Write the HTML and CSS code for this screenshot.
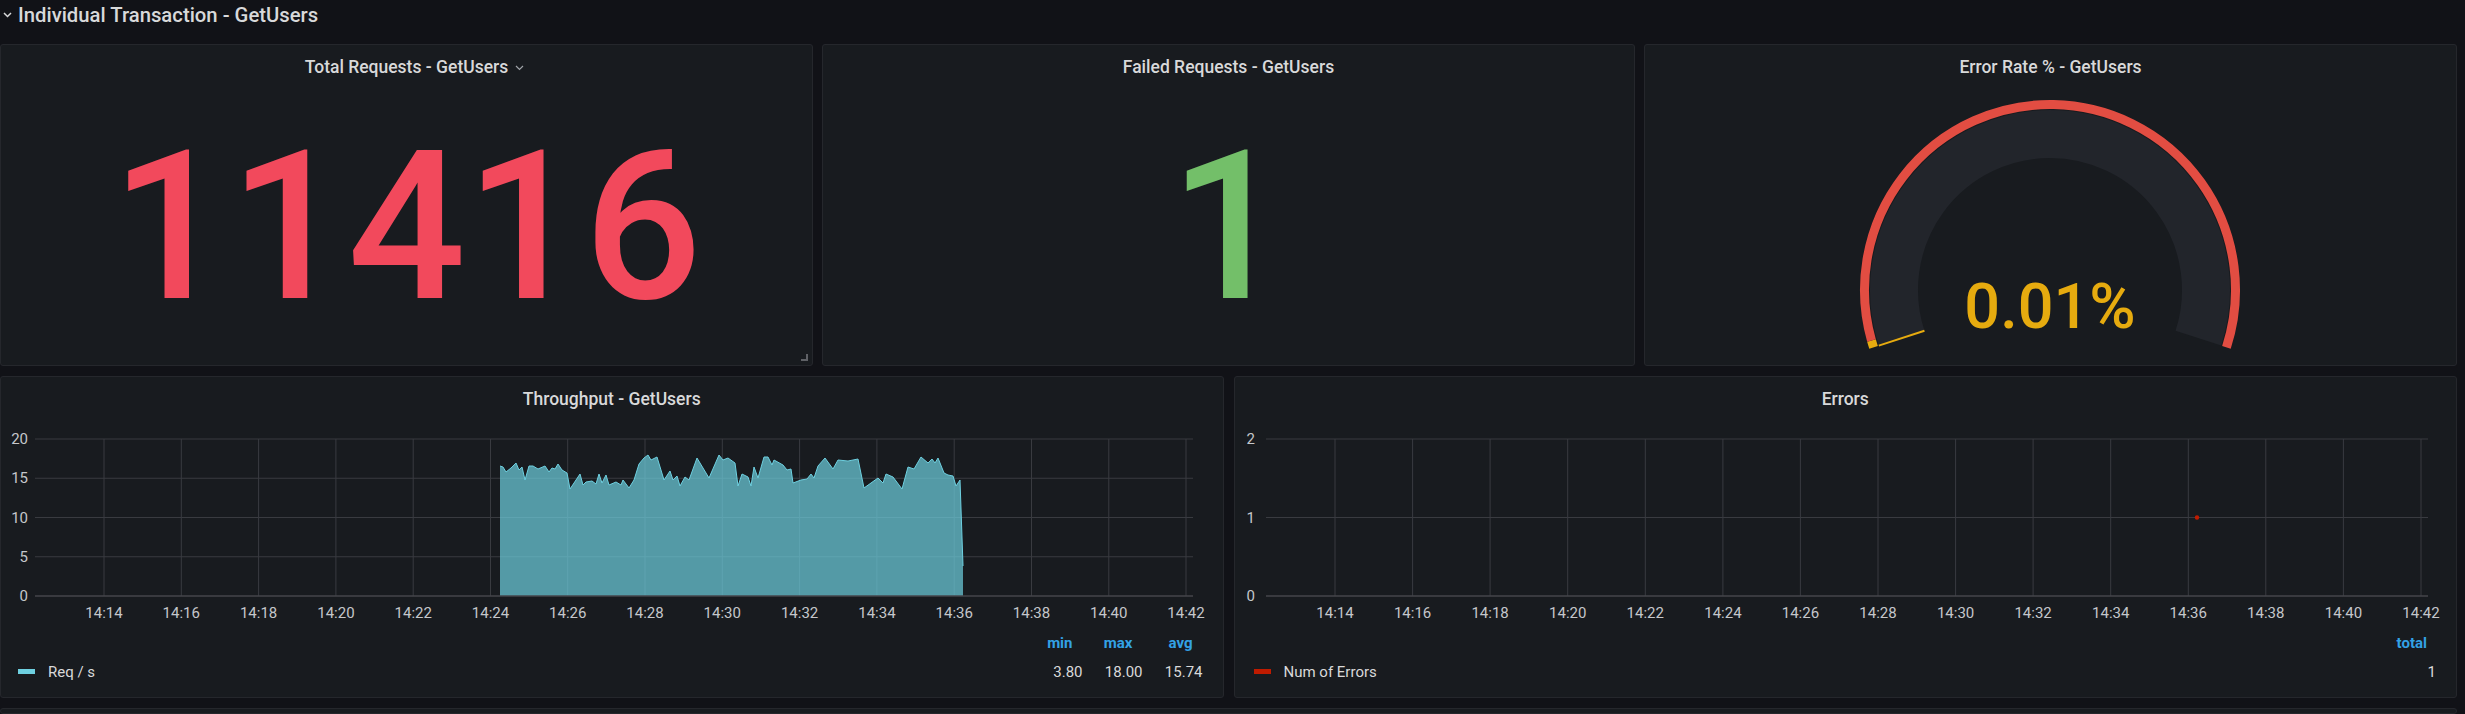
FILE: index.html
```html
<!DOCTYPE html>
<html lang="en">
<head>
<meta charset="utf-8">
<title>Individual Transaction - GetUsers</title>
<link rel="stylesheet" href="styles.css">
</head>
<body>
<div class="dashboard">
  <div class="row-header">
    <svg class="row-chevron" width="9" height="6" viewBox="0 0 9 6"><path d="M1 1 L4.5 4.5 L8 1" fill="none" stroke="#d8d9da" stroke-width="1.5"/></svg>
    <span class="row-title">Individual Transaction - GetUsers</span>
  </div>

  <div class="grid-3">
    <div class="panel">
      <div class="panel-header"><span class="title-text">Total Requests - GetUsers<svg class="title-chevron" width="9" height="6" viewBox="0 0 9 6"><path d="M1 1 L4.5 4.5 L8 1" fill="none" stroke="#9fa3a8" stroke-width="1.2"/></svg></span></div>
      <div class="stat-body stat-red">11416</div>
      <span class="resize-handle"></span>
    </div>
    <div class="panel">
      <div class="panel-header">Failed Requests - GetUsers</div>
      <div class="stat-body stat-green">1</div>
    </div>
    <div class="panel">
      <div class="panel-header">Error Rate % - GetUsers</div>
      <div class="gauge-body">
        <svg class="gauge" width="811" height="276" viewBox="0 0 811 276">
          <path d="M256.63 250.21 A156 156 0 1 1 553.37 250.21" fill="none" stroke="#22252b" stroke-width="48"/>
          <path d="M228.57 259.32 A185.5 185.5 0 0 1 226.5 252.5" fill="none" stroke="#e6ab0f" stroke-width="9"/>
          <path d="M226.5 252.5 A185.5 185.5 0 1 1 581.43 259.32" fill="none" stroke="#e24d42" stroke-width="9"/>
          <line x1="279.46" y1="242.79" x2="233.8" y2="257.62" stroke="#e6ab0f" stroke-width="2"/>
          <text class="gauge-value" x="405" y="240" text-anchor="middle">0.01%</text>
        </svg>
      </div>
    </div>
  </div>

  <div class="grid-2">
    <div class="panel">
      <div class="panel-header">Throughput - GetUsers</div>
      <svg class="graph" width="1221" height="208" viewBox="0 0 1221 208">
        <g class="grid-lines">
          <line x1="34" y1="19" x2="1192" y2="19"/>
          <line x1="34" y1="58.25" x2="1192" y2="58.25"/>
          <line x1="34" y1="97.5" x2="1192" y2="97.5"/>
          <line x1="34" y1="136.75" x2="1192" y2="136.75"/>
          <line x1="103" y1="19" x2="103" y2="176"/>
          <line x1="180.3" y1="19" x2="180.3" y2="176"/>
          <line x1="257.6" y1="19" x2="257.6" y2="176"/>
          <line x1="334.9" y1="19" x2="334.9" y2="176"/>
          <line x1="412.2" y1="19" x2="412.2" y2="176"/>
          <line x1="489.5" y1="19" x2="489.5" y2="176"/>
          <line x1="566.7" y1="19" x2="566.7" y2="176"/>
          <line x1="644" y1="19" x2="644" y2="176"/>
          <line x1="721.3" y1="19" x2="721.3" y2="176"/>
          <line x1="798.6" y1="19" x2="798.6" y2="176"/>
          <line x1="875.9" y1="19" x2="875.9" y2="176"/>
          <line x1="953.2" y1="19" x2="953.2" y2="176"/>
          <line x1="1030.5" y1="19" x2="1030.5" y2="176"/>
          <line x1="1107.8" y1="19" x2="1107.8" y2="176"/>
          <line x1="1185" y1="19" x2="1185" y2="176"/>
        </g>
        <path class="area" d="M499 176 L499 46 L502 47 L505 52 L510 48 L515 43 L518 50 L521 47 L524 60 L528 46 L532 46 L537 49 L544 46 L548 52 L551 48 L554 49 L557 44 L561 50 L566 53 L569 69 L573 63 L579 54 L582 65 L585 62 L591 61 L595 64 L598 54 L601 63 L605 55 L608 65 L615 62 L620 65 L622 60 L628 68 L633 60 L638 44 L643 38 L647 35 L650 40 L656 37 L663 60 L669 51 L672 60 L676 56 L679 66 L684 57 L688 60 L696 38 L708 58 L718 35 L722 40 L727 38 L734 43 L737 66 L741 54 L747 57 L750 66 L753 47 L757 58 L763 37 L767 37 L771 45 L773 40 L782 45 L786 50 L790 49 L792 63 L800 60 L806 59 L810 54 L813 58 L817 46 L824 38 L832 49 L837 40 L847 41 L857 39 L863 68 L877 58 L882 63 L885 54 L892 57 L901 69 L907 47 L913 49 L920 37 L927 43 L931 39 L934 43 L937 38 L943 53 L947 55 L952 56 L955 66 L959 60 L962 146 L962 176 Z"/>
        <polyline class="series-line" points="499,46 502,47 505,52 510,48 515,43 518,50 521,47 524,60 528,46 532,46 537,49 544,46 548,52 551,48 554,49 557,44 561,50 566,53 569,69 573,63 579,54 582,65 585,62 591,61 595,64 598,54 601,63 605,55 608,65 615,62 620,65 622,60 628,68 633,60 638,44 643,38 647,35 650,40 656,37 663,60 669,51 672,60 676,56 679,66 684,57 688,60 696,38 708,58 718,35 722,40 727,38 734,43 737,66 741,54 747,57 750,66 753,47 757,58 763,37 767,37 771,45 773,40 782,45 786,50 790,49 792,63 800,60 806,59 810,54 813,58 817,46 824,38 832,49 837,40 847,41 857,39 863,68 877,58 882,63 885,54 892,57 901,69 907,47 913,49 920,37 927,43 931,39 934,43 937,38 943,53 947,55 952,56 955,66 959,60 962,146"/>
        <line class="axis-line" x1="34" y1="176" x2="1192" y2="176"/>
        <g class="y-labels" text-anchor="end">
          <text x="27" y="19">20</text>
          <text x="27" y="58.25">15</text>
          <text x="27" y="97.5">10</text>
          <text x="27" y="136.75">5</text>
          <text x="27" y="176">0</text>
        </g>
        <g class="x-labels" text-anchor="middle">
          <text x="103" y="193">14:14</text>
          <text x="180.3" y="193">14:16</text>
          <text x="257.6" y="193">14:18</text>
          <text x="334.9" y="193">14:20</text>
          <text x="412.2" y="193">14:22</text>
          <text x="489.5" y="193">14:24</text>
          <text x="566.7" y="193">14:26</text>
          <text x="644" y="193">14:28</text>
          <text x="721.3" y="193">14:30</text>
          <text x="798.6" y="193">14:32</text>
          <text x="875.9" y="193">14:34</text>
          <text x="953.2" y="193">14:36</text>
          <text x="1030.5" y="193">14:38</text>
          <text x="1107.8" y="193">14:40</text>
          <text x="1185" y="193">14:42</text>
        </g>
      </svg>
      <div class="legend legend-3">
        <span></span>
        <span class="legend-head">min</span>
        <span class="legend-head">max</span>
        <span class="legend-head">avg</span>
        <span class="legend-series"><i class="swatch swatch-blue"></i>Req / s</span>
        <span class="legend-val">3.80</span>
        <span class="legend-val">18.00</span>
        <span class="legend-val">15.74</span>
      </div>
    </div>

    <div class="panel">
      <div class="panel-header">Errors</div>
      <svg class="graph" width="1222" height="208" viewBox="0 0 1222 208">
        <g class="grid-lines">
          <line x1="31" y1="19" x2="1193" y2="19"/>
          <line x1="31" y1="97.5" x2="1193" y2="97.5"/>
          <line x1="100" y1="19" x2="100" y2="176"/>
          <line x1="177.6" y1="19" x2="177.6" y2="176"/>
          <line x1="255.1" y1="19" x2="255.1" y2="176"/>
          <line x1="332.7" y1="19" x2="332.7" y2="176"/>
          <line x1="410.3" y1="19" x2="410.3" y2="176"/>
          <line x1="487.9" y1="19" x2="487.9" y2="176"/>
          <line x1="565.4" y1="19" x2="565.4" y2="176"/>
          <line x1="643" y1="19" x2="643" y2="176"/>
          <line x1="720.6" y1="19" x2="720.6" y2="176"/>
          <line x1="798.1" y1="19" x2="798.1" y2="176"/>
          <line x1="875.7" y1="19" x2="875.7" y2="176"/>
          <line x1="953.3" y1="19" x2="953.3" y2="176"/>
          <line x1="1030.8" y1="19" x2="1030.8" y2="176"/>
          <line x1="1108.4" y1="19" x2="1108.4" y2="176"/>
          <line x1="1186" y1="19" x2="1186" y2="176"/>
        </g>
        <line class="axis-line" x1="31" y1="176" x2="1193" y2="176"/>
        <circle cx="962" cy="97.5" r="2.2" fill="#bf1b00"/>
        <g class="y-labels" text-anchor="end">
          <text x="20" y="19">2</text>
          <text x="20" y="97.5">1</text>
          <text x="20" y="176">0</text>
        </g>
        <g class="x-labels" text-anchor="middle">
          <text x="100" y="193">14:14</text>
          <text x="177.6" y="193">14:16</text>
          <text x="255.1" y="193">14:18</text>
          <text x="332.7" y="193">14:20</text>
          <text x="410.3" y="193">14:22</text>
          <text x="487.9" y="193">14:24</text>
          <text x="565.4" y="193">14:26</text>
          <text x="643" y="193">14:28</text>
          <text x="720.6" y="193">14:30</text>
          <text x="798.1" y="193">14:32</text>
          <text x="875.7" y="193">14:34</text>
          <text x="953.3" y="193">14:36</text>
          <text x="1030.8" y="193">14:38</text>
          <text x="1108.4" y="193">14:40</text>
          <text x="1186" y="193">14:42</text>
        </g>
      </svg>
      <div class="legend legend-1">
        <span></span>
        <span class="legend-head">total</span>
        <span class="legend-series"><i class="swatch swatch-red"></i>Num of Errors</span>
        <span class="legend-val">1</span>
      </div>
    </div>
  </div>

  <div class="grid-1">
    <div class="panel stub"></div>
  </div>
</div>
</body>
</html>
```

FILE: styles.css
```css
html, body {
  margin: 0;
  padding: 0;
  height: 714px;
  overflow: hidden;
  background: #111217;
}

body {
  font-family: Roboto, "Noto Sans", "Liberation Sans", sans-serif;
  color: #d8d9da;
}

.dashboard {
  display: flex;
  flex-direction: column;
  padding-right: 8px;
}

.row-header {
  height: 30px;
  margin-bottom: 14px;
  display: flex;
  align-items: center;
}

.row-chevron {
  margin-left: 3px;
  margin-right: 6px;
}

.row-title {
  font-size: 20.3px;
  font-weight: 500;
  line-height: 24px;
  color: #d8d9da;
}

.grid-3 {
  display: grid;
  grid-template-columns: repeat(3, 1fr);
  gap: 9px;
  height: 322px;
  margin-bottom: 10px;
}

.grid-2 {
  display: grid;
  grid-template-columns: 1fr 1fr;
  gap: 10px;
  height: 322px;
  margin-bottom: 10px;
}

.grid-1 {
  display: grid;
  grid-template-columns: 1fr;
}

.panel {
  position: relative;
  box-sizing: border-box;
  background: #181b1f;
  border: 1px solid #25272c;
  border-radius: 3px;
  display: flex;
  flex-direction: column;
  overflow: hidden;
}

.panel-header {
  height: 43px;
  flex: none;
  display: flex;
  align-items: center;
  justify-content: center;
  font-size: 17.5px;
  font-weight: 500;
  color: #d8d9da;
}

.title-text {
  position: relative;
}

.title-chevron {
  position: absolute;
  left: 100%;
  top: 50%;
  margin-left: 7px;
  margin-top: -2px;
}

.stat-body {
  flex: 1;
  display: flex;
  align-items: center;
  justify-content: center;
  font-size: 208px;
  font-weight: 500;
  line-height: 1;
}

.stat-red {
  color: #f2495c;
}

.stat-green {
  color: #73bf69;
}

.resize-handle {
  position: absolute;
  right: 4px;
  bottom: 4px;
  width: 5px;
  height: 5px;
  border-right: 2px solid #5f6166;
  border-bottom: 2px solid #5f6166;
}

.gauge-body {
  flex: 1;
}

.gauge {
  display: block;
}

.gauge-value {
  font-family: Roboto, "Noto Sans", sans-serif;
  font-size: 63px;
  font-weight: 500;
  fill: #e6ab0f;
}

.graph {
  display: block;
  flex: none;
}

.grid-lines line {
  stroke: #393b40;
  stroke-width: 1;
}

.axis-line {
  stroke: #44464b;
  stroke-width: 1.5;
}

.area {
  fill: rgba(110, 208, 224, 0.7);
}

.series-line {
  fill: none;
  stroke: #6ed0e0;
  stroke-width: 1;
}

.y-labels text,
.x-labels text {
  font-family: Roboto, "Noto Sans", sans-serif;
  font-size: 15px;
  fill: #c5c7cb;
  dominant-baseline: central;
}

.legend {
  display: grid;
  grid-auto-rows: 29px;
  align-items: center;
  font-size: 15px;
}

.legend-3 {
  grid-template-columns: 1fr 60px 60px 60px;
  padding: 0 20px 0 17px;
}

.legend-1 {
  grid-template-columns: 1fr 60px;
  padding: 0 20px 0 19px;
}

.legend-head {
  text-align: right;
  padding-right: 10px;
  color: #33a2e5;
  font-weight: 700;
}

.legend-1 .legend-head {
  padding-right: 9px;
}

.legend-val {
  text-align: right;
  color: #d8d9da;
}

.legend-series {
  display: flex;
  align-items: center;
  color: #d8d9da;
}

.swatch {
  display: inline-block;
  width: 17px;
  height: 5px;
  margin-right: 13px;
}

.swatch-blue {
  background: #6ed0e0;
}

.swatch-red {
  background: #bf1b00;
}

.stub {
  height: 6px;
}
```
